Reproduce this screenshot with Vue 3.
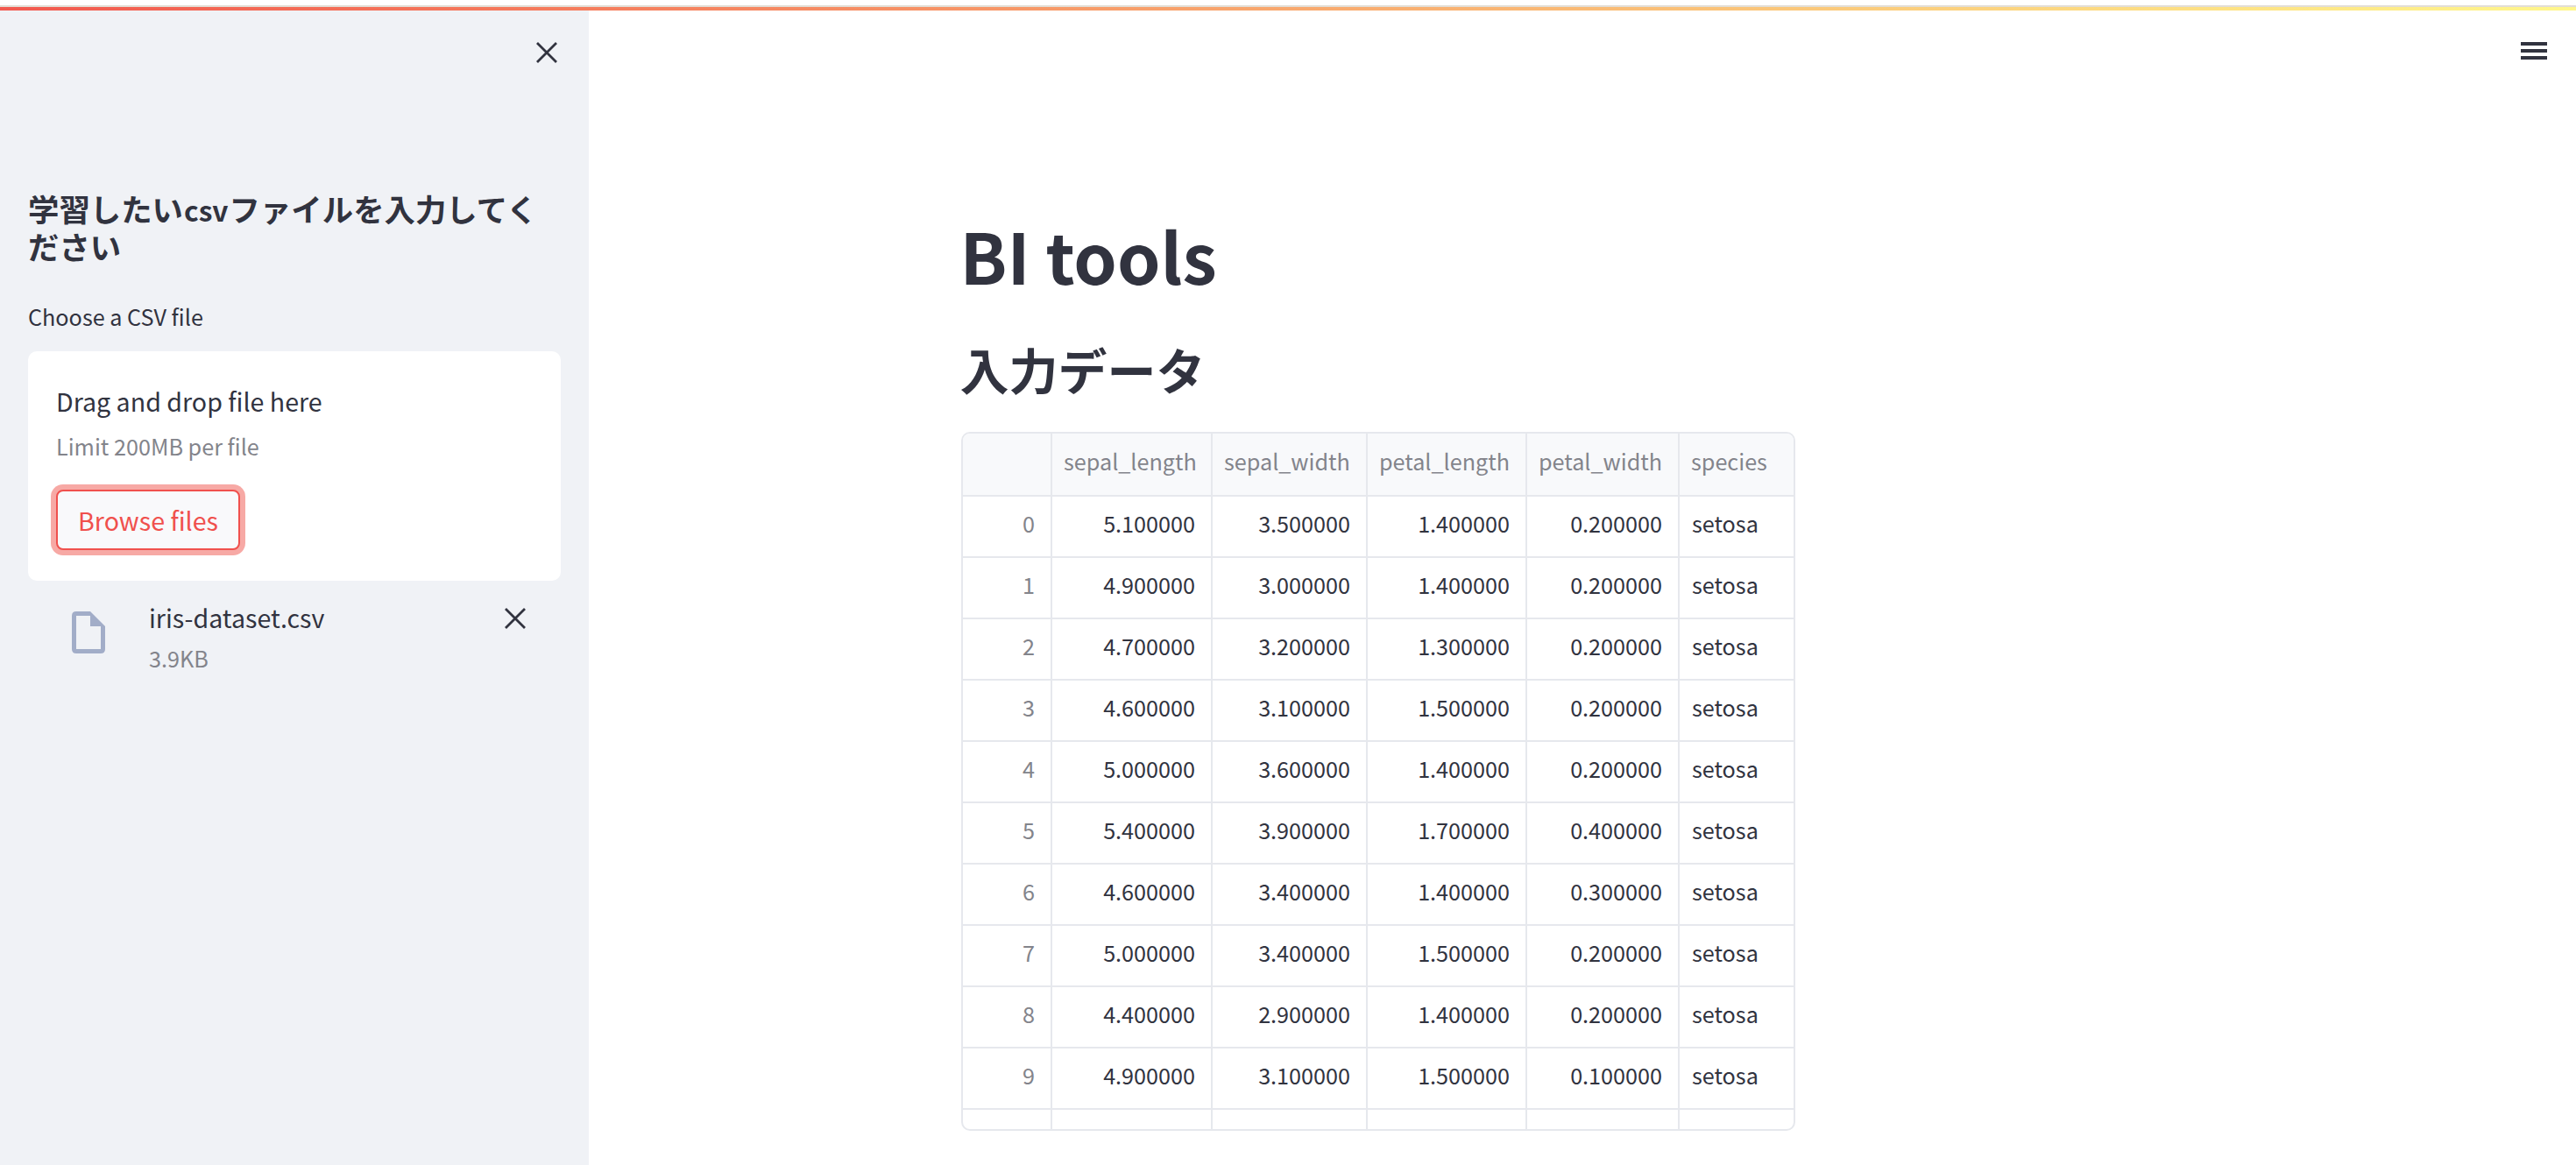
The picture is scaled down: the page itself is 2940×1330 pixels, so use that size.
<template>
  <div class="page">
    <div class="top-bar"></div>

    <aside class="sidebar">
      <button class="icon-btn close-btn" aria-label="Close sidebar">
        <svg viewBox="0 0 24 24" width="24" height="24"><path d="M1 1 L23 23 M23 1 L1 23" stroke="#31333f" stroke-width="2.8" fill="none" /></svg>
      </button>
      <h3 class="side-title">学習したい<span class="latin">csv</span>ファイルを入力してく<br />ださい</h3>
      <label class="side-label">Choose a CSV file</label>
      <div class="dropzone">
        <div class="drop-title">Drag and drop file here</div>
        <div class="drop-limit">Limit 200MB per file</div>
        <button class="browse-btn">Browse files</button>
      </div>
      <div class="file-row">
        <svg class="file-icon" viewBox="0 0 38 48" width="38" height="48">
          <path fill-rule="evenodd" fill="#a2adc8" d="M5 0 H21 L38 17 V43 Q38 48 33 48 H5 Q0 48 0 43 V5 Q0 0 5 0 Z M5 5 V43 H33 V17 H21 V5 Z" />
        </svg>
        <div class="file-info">
          <div class="file-name">iris-dataset.csv</div>
          <div class="file-size">3.9KB</div>
        </div>
        <button class="icon-btn file-remove" aria-label="Remove file">
          <svg viewBox="0 0 24 24" width="24" height="24"><path d="M1 1 L23 23 M23 1 L1 23" stroke="#31333f" stroke-width="2.8" fill="none" /></svg>
        </button>
      </div>
    </aside>

    <main class="main">
      <button class="menu-btn" aria-label="Menu">
        <span></span><span></span><span></span>
      </button>
      <div class="content">
        <h1 class="title">BI tools</h1>
        <h2 class="subtitle">入力データ</h2>
        <div class="table-wrap">
          <table class="data-table">
            <colgroup>
              <col class="col-index" />
              <col class="col-a" />
              <col class="col-b" />
              <col class="col-c" />
              <col class="col-d" />
              <col class="col-e" />
            </colgroup>
            <thead>
              <tr>
                <th></th>
                <th v-for="col in columns" :key="col">{{ col }}</th>
              </tr>
            </thead>
            <tbody>
              <tr v-for="(row, i) in rows" :key="i">
                <td class="index">{{ i }}</td>
                <td v-for="(val, j) in row" :key="j" class="num">{{ val }}</td>
                <td class="text">setosa</td>
              </tr>
              <tr class="cut-row">
                <td></td><td></td><td></td><td></td><td></td><td></td>
              </tr>
            </tbody>
          </table>
        </div>
      </div>
    </main>
  </div>
</template>

<script setup>
const columns = ['sepal_length', 'sepal_width', 'petal_length', 'petal_width', 'species']

const rows = [
  ['5.100000', '3.500000', '1.400000', '0.200000'],
  ['4.900000', '3.000000', '1.400000', '0.200000'],
  ['4.700000', '3.200000', '1.300000', '0.200000'],
  ['4.600000', '3.100000', '1.500000', '0.200000'],
  ['5.000000', '3.600000', '1.400000', '0.200000'],
  ['5.400000', '3.900000', '1.700000', '0.400000'],
  ['4.600000', '3.400000', '1.400000', '0.300000'],
  ['5.000000', '3.400000', '1.500000', '0.200000'],
  ['4.400000', '2.900000', '1.400000', '0.200000'],
  ['4.900000', '3.100000', '1.500000', '0.100000']
]
</script>

<style>
html, body {
  margin: 0;
  background: #fff;
  overflow: hidden;
}
</style>

<style scoped>
.page {
  position: relative;
  display: flex;
  width: 2940px;
  height: 1330px;
  padding-top: 12px;
  box-sizing: border-box;
  font-family: "Noto Sans CJK JP", "Noto Sans", sans-serif;
  color: #31333f;
  background: #fff;
  overflow: hidden;
}

.top-bar {
  position: absolute;
  top: 6px;
  left: 0;
  right: 0;
  height: 6px;
  border-top: 2px solid #e2ded6;
  box-sizing: border-box;
  background: linear-gradient(90deg, #f2594f, #fff78c);
}

.sidebar {
  position: relative;
  width: 672px;
  flex-shrink: 0;
  box-sizing: border-box;
  padding: 204px 32px 0;
  background: #f0f2f6;
}

.icon-btn {
  border: 0;
  padding: 0;
  background: none;
  line-height: 0;
}

.close-btn {
  position: absolute;
  top: 36px;
  left: 612px;
}

.side-title {
  margin: 0;
  font-size: 35.4px;
  line-height: 43px;
  font-weight: 700;
}

.latin {
  display: inline-block;
  margin: 0 1px;
  font-size: 31.7px;
  line-height: 1;
}

.side-label {
  display: block;
  margin-top: 39px;
  font-size: 25.2px;
  line-height: 40px;
}

.dropzone {
  margin-top: 20px;
  height: 262px;
  box-sizing: border-box;
  padding: 35px 32px 0;
  border-radius: 10px;
  background: #fff;
}

.drop-title {
  font-size: 28.6px;
  line-height: 44px;
}

.drop-limit {
  margin-top: 9px;
  font-size: 25.2px;
  line-height: 40px;
  color: #83848b;
}

.browse-btn {
  display: block;
  margin-top: 30px;
  width: 210px;
  height: 69px;
  box-sizing: border-box;
  padding: 0;
  border: 2px solid #f0504d;
  border-radius: 8px;
  background: #f9f9fb;
  box-shadow: 0 0 0 6px #f7a9a5;
  color: #f0504d;
  font-family: inherit;
  font-size: 28.6px;
}

.file-row {
  display: flex;
  align-items: flex-start;
  margin-top: 20px;
  padding-left: 50px;
}

.file-icon {
  margin-top: 15px;
  flex-shrink: 0;
}

.file-info {
  flex: 1;
  margin-left: 50px;
}

.file-name {
  font-size: 28.6px;
  line-height: 44px;
}

.file-size {
  margin-top: 4px;
  font-size: 25.2px;
  line-height: 40px;
  color: #83848b;
}

.file-remove {
  margin-top: 11px;
  margin-right: 40px;
}

.main {
  position: relative;
  flex: 1;
  min-width: 0;
}

.menu-btn {
  position: absolute;
  top: 36px;
  right: 33px;
  display: flex;
  flex-direction: column;
  gap: 4px;
  width: 30px;
  padding: 0;
  border: 0;
  background: none;
}

.menu-btn span {
  display: block;
  height: 4px;
  background: #31333f;
}

.content {
  width: 1418px;
  margin: 0 auto;
  padding-top: 224px;
}

.title {
  margin: 0 0 0 -1.5px;
  font-size: 79.2px;
  line-height: 110px;
  font-weight: 700;
}

.subtitle {
  margin: 35px 0 0 -1.5px;
  font-size: 56px;
  line-height: 80px;
  font-weight: 700;
}

.table-wrap {
  width: 952px;
  margin-top: 32px;
  box-sizing: border-box;
  border: 2px solid #e6e8ed;
  border-radius: 10px;
  overflow: hidden;
}

.data-table {
  width: 100%;
  table-layout: fixed;
  border-collapse: collapse;
  font-size: 25.2px;
}

.col-index { width: 101px; }
.col-a { width: 183px; }
.col-b { width: 177px; }
.col-c { width: 182px; }
.col-d { width: 174px; }

.data-table th,
.data-table td {
  padding: 0 18px 9px 13px;
  border-left: 2px solid #e6e8ed;
  border-bottom: 2px solid #e6e8ed;
  box-sizing: border-box;
  white-space: nowrap;
}

.data-table th:first-child,
.data-table td:first-child {
  border-left: 0;
}

.data-table th {
  height: 71px;
  padding-bottom: 8px;
  background: #f8f9fb;
  color: #83848b;
  font-weight: 400;
  text-align: left;
}

.data-table td {
  height: 70px;
}

.index {
  text-align: right;
  color: #83848b;
}

.num {
  text-align: right;
}

.data-table .text {
  padding-left: 14px;
  text-align: left;
}

.data-table .cut-row td {
  height: 23px;
  padding: 0;
  border-bottom: 0;
}
</style>
